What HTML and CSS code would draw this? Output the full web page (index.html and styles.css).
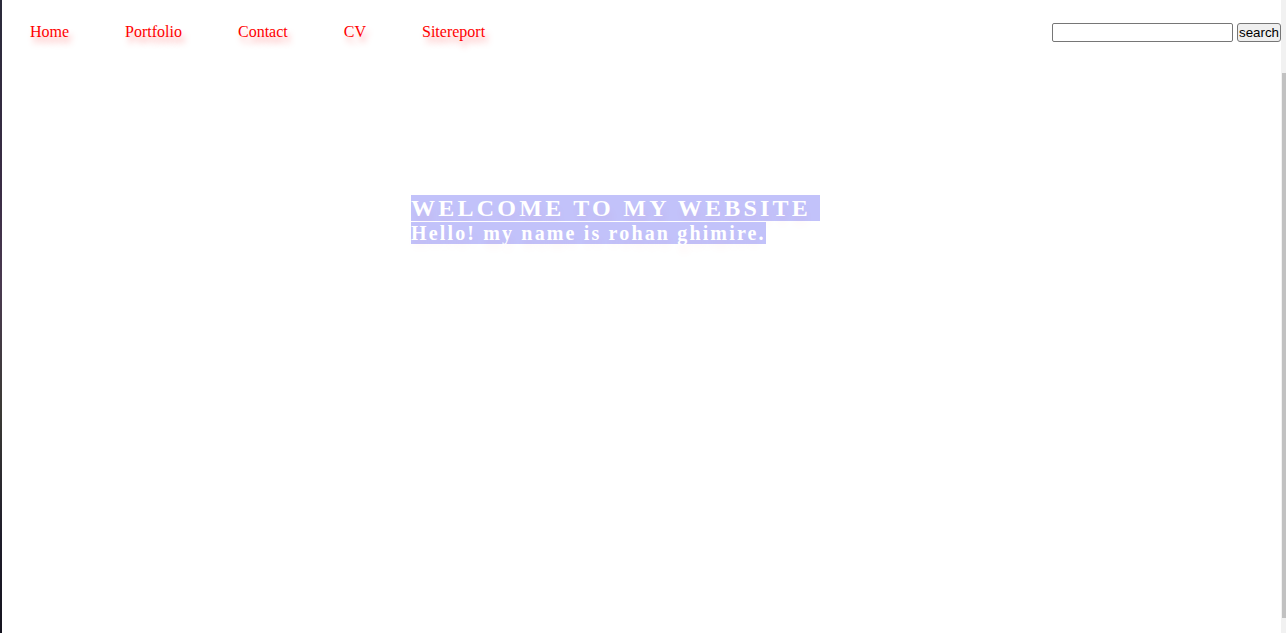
FILE: index.html
```html
<!DOCTYPE html>
<html>
<head>
<meta charset="utf-8">
<title>Rohan Ghimire</title>
<link rel="stylesheet" href="styles.css">
</head>
<body>
<div class="page">
  <header class="topbar">
    <nav class="menu">
      <a href="#" class="menu-link">Home</a>
      <a href="#" class="menu-link">Portfolio</a>
      <a href="#" class="menu-link">Contact</a>
      <a href="#" class="menu-link">CV</a>
      <a href="#" class="menu-link">Sitereport</a>
    </nav>
    <form class="search">
      <input type="text" class="search-input">
      <button type="button" class="search-btn">search</button>
    </form>
  </header>
  <main class="hero">
    <h1 class="hero-title"><span class="sel">WELCOME TO MY WEBSITE&nbsp;</span></h1>
    <p class="hero-sub"><span class="sel">Hello! my name is rohan ghimire.</span></p>
  </main>
</div>
<div class="scrollbar"><div class="scroll-thumb"></div></div>
</body>
</html>
```

FILE: styles.css
```css
html, body {
  margin: 0;
  padding: 0;
  height: 100%;
  background: #ffffff;
  overflow: hidden;
}
body {
  font-family: "Liberation Serif", "Times New Roman", serif;
}
.page {
  min-height: 100%;
  box-sizing: border-box;
  border-left: 2px solid #2e2838;
  border-image: linear-gradient(to bottom, #2a2a3a 0%, #3a2c45 30%, #4a3a50 45%, #3b3a35 65%, #1e1c2a 85%, #15141f 100%) 1;
  padding-right: 5px;
}
.topbar {
  display: flex;
  justify-content: space-between;
  align-items: center;
  padding-top: 21px;
  height: 21px;
}
.menu {
  display: flex;
  gap: 56px;
  padding-left: 28px;
}
.menu-link {
  color: #ff0000;
  text-decoration: none;
  font-size: 16px;
  line-height: 18px;
  text-shadow: 3px 6px 6px rgba(255, 0, 0, 0.35);
}
.search {
  display: flex;
  align-items: center;
  gap: 4px;
  margin: 0;
  padding-top: 1px;
}
.search-input {
  width: 181px;
  height: 19px;
  box-sizing: border-box;
  border: 1px solid #767676;
  border-radius: 2px;
  padding: 1px 2px;
  margin: 0;
  background: #fff;
}
.search-btn {
  width: 44px;
  height: 19px;
  box-sizing: border-box;
  border: 1px solid #767676;
  border-radius: 3px;
  background: #efefef;
  font-family: "Liberation Sans", Arial, sans-serif;
  font-size: 13.33px;
  color: #000;
  padding: 0 1px;
  margin: 0;
  line-height: 15px;
}
.hero {
  padding-top: 153px;
  padding-left: 409px;
  color: #ffffff;
}
.hero-title {
  margin: 0;
  font-size: 24px;
  font-weight: bold;
  letter-spacing: 3.25px;
  line-height: 27px;
}
.hero-sub {
  margin: 0;
  font-size: 20px;
  font-weight: bold;
  letter-spacing: 2.15px;
  line-height: 23px;
}
.sel {
  background: #c2c2fa;
  text-shadow: 2px 8px 8px rgba(255, 0, 0, 0.05);
}
.scrollbar {
  position: fixed;
  top: 0;
  right: 0;
  width: 5px;
  height: 100%;
  background: #f1f1f1;
}
.scroll-thumb {
  position: absolute;
  top: 73px;
  left: 1px;
  width: 4px;
  height: 545px;
  background: #c1c1c1;
}
```
